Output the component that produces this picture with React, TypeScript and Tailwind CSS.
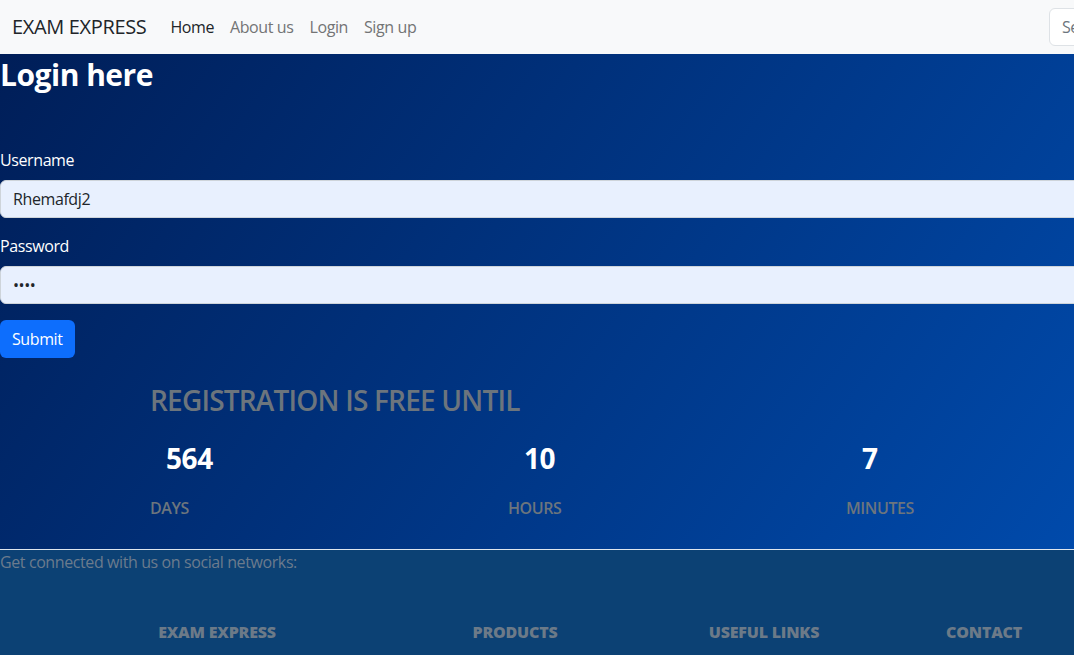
import { useState } from "react";

const font = { fontFamily: '"Open Sans", "Noto Sans", Arial, sans-serif' };

function Navbar() {
  return (
    <nav className="flex h-[54px] items-center bg-[#f8f9fa] pl-3 overflow-hidden">
      <a className="mr-4 text-[20px] tracking-[-0.35px] text-[#212529] whitespace-nowrap">EXAM EXPRESS</a>
      <ul className="flex text-[16px] whitespace-nowrap">
        <li className="px-2 text-[#212529]">Home</li>
        <li className="px-2 text-[#737475]">About us</li>
        <li className="px-2 text-[#737475]">Login</li>
        <li className="px-2 text-[#737475]">Sign up</li>
      </ul>
      <div className="ml-auto -mr-[75px]">
        <input
          placeholder="Search"
          className="h-[38px] w-[100px] rounded-md border border-[#dee2e6] bg-white px-3 text-[16px] text-[#212529] placeholder:text-[#6c757d]"
        />
      </div>
    </nav>
  );
}

function LoginForm() {
  const [username, setUsername] = useState("Rhemafdj2");
  const [password, setPassword] = useState("abcd");
  return (
    <div className="overflow-hidden">
      <h1 className="text-[30px] font-bold leading-[1.2] tracking-[-0.5px] text-white pt-[3px]">Login here</h1>
      <form className="mt-[55px]" onSubmit={(e) => e.preventDefault()}>
        <label className="block text-[16px] text-white leading-6 mb-[8px]">Username</label>
        <input
          value={username}
          onChange={(e) => setUsername(e.target.value)}
          className="block h-[38px] w-[1100px] rounded-md border border-[#ced4da] bg-[#e8f0fe] px-3 text-[16px] text-[#212529] outline-none"
        />
        <label className="block text-[16px] text-white leading-6 mt-[16px] mb-[8px]">Password</label>
        <input
          type="password"
          value={password}
          onChange={(e) => setPassword(e.target.value)}
          className="block h-[38px] w-[1100px] rounded-md border border-[#ced4da] bg-[#e8f0fe] px-3 text-[16px] text-[#212529] outline-none"
        />
        <button className="mt-[16px] h-[38px] rounded-md bg-[#0d6efd] px-3 text-[16px] text-white">Submit</button>
      </form>
    </div>
  );
}

const units = [
  { value: "564", label: "DAYS", width: "w-[358px]" },
  { value: "10", label: "HOURS", width: "w-[338px]" },
  { value: "7", label: "MINUTES", width: "w-[200px]" },
];

function Countdown() {
  return (
    <section className="pl-[150px] pt-[26px] pb-[29px]">
      <h2 className="text-[28px] font-semibold leading-[1.2] tracking-[-0.8px] text-[#6c757d]">REGISTRATION IS FREE UNTIL</h2>
      <div className="flex mt-[24px]">
        {units.map((u) => (
          <div key={u.label} className={u.width}>
            <div className="pl-4 text-[28px] font-bold leading-[1.2] text-white">{u.value}</div>
            <div className="mt-[21px] text-[16px] font-semibold leading-6 text-[#6c757d]">{u.label}</div>
          </div>
        ))}
      </div>
    </section>
  );
}

function Footer() {
  return (
    <footer className="bg-[#0c4174] border-t border-[#dfe6ee] h-[106px]">
      <div className="text-[16px] leading-6 text-[#6b7b8d]">Get connected with us on social networks:</div>
      <div className="flex mt-[46px] text-[16px] font-extrabold leading-6 tracking-[-0.2px] text-[#6c7a88]">
        <div className="w-[434px] text-center">EXAM EXPRESS</div>
        <div className="w-[162px] text-center">PRODUCTS</div>
        <div className="w-[336px] text-center">USEFUL LINKS</div>
        <div className="w-[104px] text-center">CONTACT</div>
      </div>
    </footer>
  );
}

export default function App() {
  return (
    <div style={font} className="w-[1074px] h-[655px] overflow-hidden tracking-[-0.4px]">
      <Navbar />
      <main className="bg-[linear-gradient(125deg,#001e58_0%,#004aab_100%)]">
        <LoginForm />
        <Countdown />
      </main>
      <Footer />
    </div>
  );
}
